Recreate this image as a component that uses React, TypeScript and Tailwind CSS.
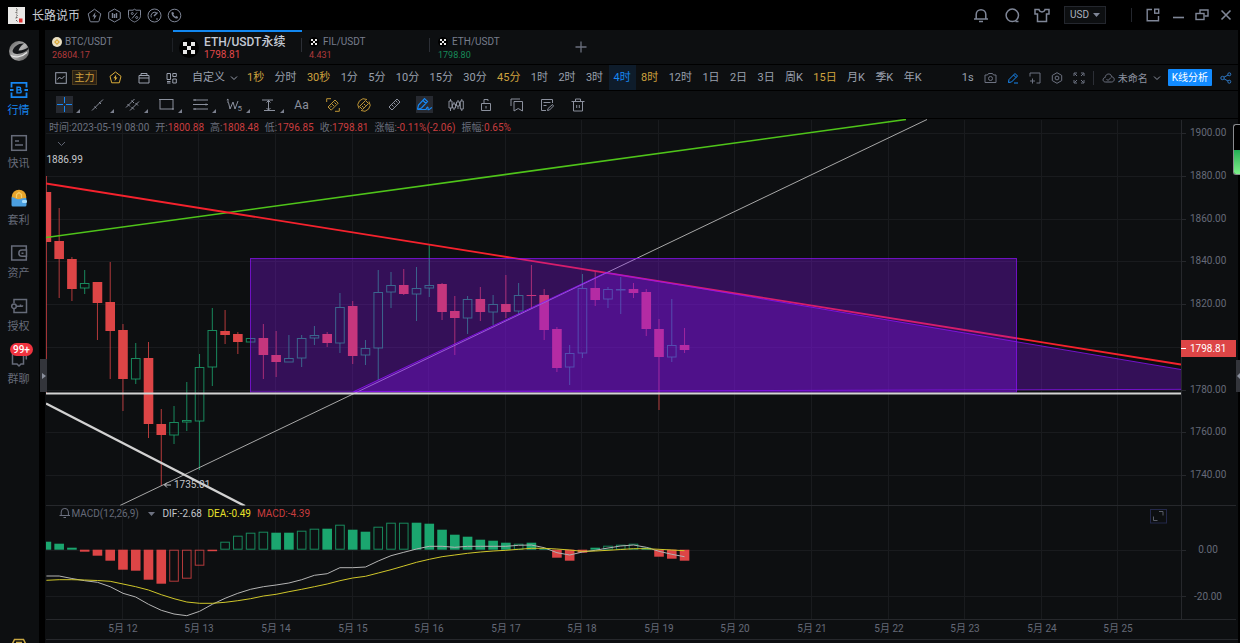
import React from "react";

type Kids = { children: React.ReactNode };

function Icon({ w = 12, h = 12, sw = 1, className = "", children }: Kids & { w?: number; h?: number; sw?: number; className?: string }) {
  return (
    <svg width={w} height={h} viewBox={`0 0 ${w} ${h}`} fill="none" stroke="currentColor" strokeWidth={sw} className={`shrink-0 ${className}`} aria-hidden="true">
      {children}
    </svg>
  );
}

function IconButton({ label, className = "", children }: Kids & { label: string; className?: string }) {
  return (
    <button type="button" aria-label={label} className={`flex shrink-0 items-center justify-center ${className}`}>
      {children}
    </button>
  );
}

/* ---------- title bar ---------- */

function TitleBar() {
  return (
    <header className="flex h-[30px] shrink-0 items-center bg-black pr-2 pl-2 text-[#7f8697]">
      <svg width="17" height="17" viewBox="0 0 17 17" className="shrink-0" aria-hidden="true">
        <rect width="17" height="17" fill="#e9e8e6" />
        <path d="M8 1.5l1.5 1M8.8 3v1.500M7.500 5.500l2 .5M8.500 7.500l1 1.500M7.500 11l2-.5M8 13l1.500 1.500M8.500 9.500v1" stroke="#55524f" strokeWidth=".9" fill="none" />
        <rect x="11" y="11.500" width="3.500" height="4" fill="#e03030" />
      </svg>
      <h1 className="ml-[7px] pt-px text-[12px] leading-4 text-[#c6cad3]">长路说币</h1>
      <nav aria-label="快捷工具" className="ml-[7px] flex gap-[5px]">
        <IconButton label="闪电">
          <Icon w={15} h={15}>
            <path d="M7.500 1.200l6.300 4.600-1.800 7.300q-.2.700-.9.700H3.900q-.7 0-.9-.7L1.200 5.800z" />
            <path d="M8.500 4L5.300 8.500h1.900L6.500 12l3.200-4.600H7.800z" fill="currentColor" stroke="none" />
          </Icon>
        </IconButton>
        <IconButton label="行情">
          <Icon w={15} h={15}>
            <path d="M7.500 1l5.800 3.300v6.400L7.500 14l-5.800-3.300V4.300z" />
            <path d="M5.500 5v5M7.500 6v4M9.500 5v5" strokeWidth="1.400" />
          </Icon>
        </IconButton>
        <IconButton label="费率">
          <Icon w={15} h={15}>
            <path d="M7.500 1.200l1.500 1h4.500v5.500c0 3-3 5.200-6 6.300-3-1.100-6-3.300-6-6.300V2.200H6z" />
            <path d="M10 4.500l-5 6" />
            <circle cx="5.300" cy="5.500" r="1" />
            <circle cx="9.700" cy="9.500" r="1" />
          </Icon>
        </IconButton>
        <IconButton label="指标">
          <Icon w={15} h={15}>
            <circle cx="7.500" cy="7.500" r="6.500" />
            <path d="M4.300 9.500a3.800 3.800 0 0 1 5-5" />
            <path d="M10.500 4.500L7 8" strokeWidth="1.400" />
            <path d="M9 11h2" />
          </Icon>
        </IconButton>
        <IconButton label="电话">
          <Icon w={15} h={15}>
            <circle cx="7.500" cy="7.500" r="6.300" />
            <path d="M4.600 4.300c-.8 2.800 2.800 6.600 5.900 6.300l.6-1.700-1.700-.8-.9.6C7.500 8.200 6.800 7.500 6.300 6.600l.7-.9-.8-1.700z" fill="currentColor" stroke="none" />
          </Icon>
        </IconButton>
      </nav>

      <div className="ml-auto flex items-center">
        <IconButton label="通知">
          <Icon w={14} h={15} sw={1.5}>
            <path d="M0 11h14M2.200 11V6.500a4.800 4.800 0 0 1 9.600 0V11M5 13.500h4" />
          </Icon>
        </IconButton>
        <IconButton label="搜索" className="ml-[17px]">
          <Icon w={15} h={15} sw={1.5}>
            <circle cx="7.300" cy="7.300" r="6.200" />
            <path d="M10.500 13.500h3" />
          </Icon>
        </IconButton>
        <IconButton label="皮肤" className="ml-[14px]">
          <Icon w={16} h={15} sw={1.5}>
            <path d="M5 1.500H1v4.500h2.500v7.500h9V6H15V1.500h-4C10.500 4.700 5.500 4.700 5 1.500z" />
          </Icon>
        </IconButton>
        <label className="relative ml-[14px] flex h-[18px] w-[42px] items-center border border-[#24272e] bg-[#0d0f11] text-[#a9afbc]">
          <select aria-label="计价货币" defaultValue="USD" className="h-full w-full appearance-none bg-transparent pl-[5px] text-[10px] leading-4 outline-none">
            <option>USD</option>
            <option>CNY</option>
          </select>
          <svg width="7" height="4" viewBox="0 0 7 4" className="pointer-events-none absolute right-[5px]" aria-hidden="true">
            <path d="M0 0h7L3.500 4z" fill="#7f8697" />
          </svg>
        </label>
        <span className="ml-[25px] h-[14px] w-px bg-[#24272e]" />
        <IconButton label="弹出窗口" className="ml-[14px]">
          <Icon w={14} h={14} sw={1.4}>
            <path d="M6 1.500H1.200v11.300h11.300V8" />
            <rect x="8.700" y="1.200" width="4" height="4" />
          </Icon>
        </IconButton>
        <IconButton label="最小化" className="ml-[12px]">
          <Icon w={12} h={14} sw={1.6}>
            <path d="M1 9.500h11" />
          </Icon>
        </IconButton>
        <IconButton label="还原" className="ml-[11px]">
          <Icon w={14} h={14} sw={1.4}>
            <path d="M5 5V2h8v6H9.500" />
            <rect x="1" y="5.500" width="8" height="6" />
          </Icon>
        </IconButton>
        <IconButton label="关闭" className="ml-[11px]">
          <Icon w={12} h={12} sw={1.6}>
            <path d="M1.500 1.500l9 9M10.500 1.500l-9 9" />
          </Icon>
        </IconButton>
      </div>
    </header>
  );
}

/* ---------- side bar ---------- */

function SideItem({ label, active = false, badge, tall = false, children }: Kids & { label: string; active?: boolean; badge?: string; tall?: boolean }) {
  return (
    <li>
      <a href="#" className={`relative flex w-[37px] flex-col items-center gap-1 ${active ? "text-[#1787f2]" : "text-[#666b79]"}`}>
        <span className={`flex items-center justify-center ${tall ? "h-[22px]" : "h-[18px]"}`}>{children}</span>
        <span className="text-[11px] leading-4">{label}</span>
        {badge && <span className="absolute -top-[7px] left-[10px] rounded-full bg-[#f0333f] px-[3px] text-[10px] leading-[13px] font-medium text-white">{badge}</span>}
      </a>
    </li>
  );
}

function SideBar() {
  return (
    <aside className="flex w-[39px] shrink-0 flex-col items-center overflow-hidden bg-[#0d0f11] pr-[2px]">
      <svg width="22" height="22" viewBox="0 0 22 22" className="mt-[10px] shrink-0" aria-hidden="true">
        <defs>
          <linearGradient id="ball" x1="0" y1="0" x2="1" y2="1">
            <stop offset="0" stopColor="#5d5d5d" />
            <stop offset=".5" stopColor="#b5b5b5" />
            <stop offset="1" stopColor="#4a4a4a" />
          </linearGradient>
        </defs>
        <circle cx="11" cy="11" r="10" fill="url(#ball)" />
        <path d="M4.500 11C6 6.500 10.500 3 16 3.500 13 5 11.500 8 10.500 10.500c3 .3 7-1 10-3.500.5 2-1.500 4-5 5.500-4 1.700-10.500 2.500-11-1.500z" fill="#15171a" />
        <path d="M3 15.500c4 2.500 11 1.500 16-3" stroke="#e6e6e6" strokeWidth="1.200" fill="none" />
      </svg>
      <ul className="mt-[19px] flex flex-col gap-[15px]">
        <SideItem label="行情" active>
          <Icon w={18} h={18} sw={1.8}>
            <path d="M1.500 6.500V1.800h15v4.700M1.500 11.500v4.700h15v-4.700M0 9h3.500M14.500 9H18" />
            <path d="M7 6.200h2.300a1.300 1.300 0 0 1 0 2.700H7zM7 8.900h2.700a1.500 1.500 0 0 1 0 3H7z" strokeWidth="1.400" />
          </Icon>
        </SideItem>
        <SideItem label="快讯">
          <Icon w={18} h={18} sw={1.5}>
            <rect x="1.700" y="1.700" width="14.600" height="14.600" />
            <path d="M5 7h4M5 11h8" />
          </Icon>
        </SideItem>
        <SideItem label="套利" tall>
          <svg width="18" height="18" viewBox="0 0 18 18" aria-hidden="true">
            <circle cx="9" cy="8" r="7.300" fill="#e7a52c" />
            <path d="M6.500 9V5.500L9 3.500l2.500 2V9" stroke="#f5cf6a" strokeWidth="1.200" fill="none" />
            <path d="M1.500 8.500c2-1.200 4 1.800 7 1.800s5-2 8-.8V16q0 1.500-1.500 1.500H3Q1.500 17.500 1.500 16z" fill="#4b9fe0" />
            <rect x="12" y="11" width="5" height="3" rx="1.300" fill="#a5dbfb" />
          </svg>
        </SideItem>
        <SideItem label="资产">
          <Icon w={18} h={18} sw={1.5}>
            <path d="M16.300 6V2H1.700v14h14.600v-3.500M16.500 6H12a3 3 0 0 0 0 6.300h4.500zM11.500 9.200h2" />
          </Icon>
        </SideItem>
        <SideItem label="授权">
          <Icon w={18} h={18} sw={1.5}>
            <path d="M4 6V2.500h12.500v13H4V12" />
            <circle cx="4" cy="9.200" r="2.300" />
            <path d="M6.300 9.200h6.500M10.500 9.200V7.500M12.500 9.200v-1" />
          </Icon>
        </SideItem>
        <SideItem label="群聊" badge="99+">
          <Icon w={18} h={18} sw={1.5}>
            <path d="M2.500 4v10h4.500l2 2 2-2h2.500V4M16.300 2v7.500" />
          </Icon>
        </SideItem>
      </ul>
      <div className="mt-auto h-[5px] overflow-hidden text-[#c9a844]">
        <Icon w={16} h={16} sw={1.5}>
          <path d="M3.500 1.500h9l2 4v8h-13v-8zM5 4.500h6" />
        </Icon>
      </div>
    </aside>
  );
}

/* ---------- tabs ---------- */

function CrossMark({ size }: { size: number }) {
  return (
    <svg width={size} height={size} viewBox="0 0 20 20" className="shrink-0" aria-hidden="true">
      <circle cx="10" cy="10" r="10" fill="#000" />
      <path d="M4 4h4v4H4zM12 4h4v4h-4zM8 8h4v4H8zM4 12h4v4H4zM12 12h4v4h-4z" fill="#e8e8e8" />
    </svg>
  );
}

function SymbolTabs() {
  return (
    <nav aria-label="交易对" className="flex h-[34px] shrink-0 bg-[#0d0f11]">
      <a href="#" className="relative w-[128px] pt-[5px] pl-[7px]">
        <span className="flex items-center gap-[3px] text-[10px] leading-[14px] text-[#777d8c]">
          <svg width="10" height="10" viewBox="0 0 10 10" aria-hidden="true">
            <circle cx="5" cy="5" r="5" fill="#e9dfc4" />
            <path d="M5 2l3 3-3 3-3-3zM3.800 5L5 6.200 6.200 5 5 3.800z" fill="#d9a93a" fillRule="evenodd" />
          </svg>
          BTC/USDT
        </span>
        <span className="block text-[9px] leading-[12px] text-[#b03a3c]">26804.17</span>
        <span className="absolute top-2 right-0 h-[14px] w-px bg-[#1e2126]" />
      </a>
      <a href="#" aria-current="page" className="relative flex w-[129px] items-center gap-[5px] border-t-2 border-[#1287f0] pl-[6px]">
        <CrossMark size={20} />
        <span>
          <span className="block text-[12px] leading-[14px] font-medium text-[#c4c9d4]">ETH/USDT永续</span>
          <span className="block text-[10px] leading-[12px] text-[#e0484a]">1798.81</span>
        </span>
        <span className="absolute top-[6px] right-0 h-[14px] w-px bg-[#2c2f36]" />
      </a>
      <a href="#" className="relative w-[128px] pt-[5px] pl-[7px]">
        <span className="flex items-center gap-1 text-[10px] leading-[14px] text-[#777d8c]">
          <CrossMark size={10} />
          FIL/USDT
        </span>
        <span className="block text-[9px] leading-[12px] text-[#b03a3c]">4.431</span>
        <span className="absolute top-2 right-0 h-[14px] w-px bg-[#2c2f36]" />
      </a>
      <a href="#" className="w-[128px] pt-[5px] pl-2">
        <span className="flex items-center gap-1 text-[10px] leading-[14px] text-[#777d8c]">
          <CrossMark size={10} />
          ETH/USDT
        </span>
        <span className="block text-[9px] leading-[12px] text-[#178a58]">1798.80</span>
      </a>
      <IconButton label="添加" className="ml-[17px] text-[#6a6f7d]">
        <Icon w={12} h={12} sw={1.3}>
          <path d="M6 .5v11M.5 6h11" />
        </Icon>
      </IconButton>
    </nav>
  );
}

/* ---------- period bar ---------- */

const periods: { name: string; gold?: boolean; active?: boolean }[] = [
  { name: "1秒", gold: true }, { name: "分时" }, { name: "30秒", gold: true }, { name: "1分" }, { name: "5分" },
  { name: "10分" }, { name: "15分" }, { name: "30分" }, { name: "45分", gold: true }, { name: "1时" },
  { name: "2时" }, { name: "3时" }, { name: "4时", active: true }, { name: "8时", gold: true }, { name: "12时" },
  { name: "1日" }, { name: "2日" }, { name: "3日" }, { name: "周K" }, { name: "15日", gold: true },
  { name: "月K" }, { name: "季K" }, { name: "年K" },
];

function Chevron() {
  return (
    <Icon w={8} h={6} className="pointer-events-none">
      <path d="M1 1.500l3 3 3-3" />
    </Icon>
  );
}

function PeriodBar() {
  return (
    <div className="flex h-[26px] shrink-0 items-stretch border-t border-black bg-[#0d0f11] pr-[6px] pl-[10px] text-[11px] text-[#9aa0ae]">
      <IconButton label="图表类型">
        <Icon>
          <rect x=".7" y=".7" width="10.600" height="10.600" />
          <path d="M2.500 7.500L4.500 5l2 2 3-3" />
        </Icon>
      </IconButton>
      <button type="button" className="ml-[5px] h-[15px] w-[25px] self-center border border-[#4d3b1c] bg-[#2a2114] text-center text-[10px] leading-[14px] text-[#d0a03f]">主力</button>
      <IconButton label="闪电下单" className="ml-[12px] text-[#dcae3a]">
        <Icon w={13} h={13}>
          <path d="M6.500 1l5.500 4.300-1.700 6.500H2.700L1 5.300z" />
          <path d="M7.300 3.500L4.500 7.300h1.600l-.5 3 2.900-3.900H6.800z" fill="currentColor" stroke="none" />
        </Icon>
      </IconButton>
      <IconButton label="日历" className="ml-4">
        <Icon>
          <path d="M1 3.500h10V11H1zM3 3.500v-2h6v2M1 6h10" />
        </Icon>
      </IconButton>
      <IconButton label="布局" className="ml-4">
        <Icon>
          <path d="M1 1.500h3.500v6H1zM1 9.500h3.500M6.800 1.500h3.500v3H6.800zM6.800 7h3.500v4H6.800zM1 11h3.500" />
        </Icon>
      </IconButton>
      <label className="ml-[14px] flex items-center gap-1">
        <select aria-label="自定义周期" defaultValue="自定义" className="w-[34px] appearance-none bg-transparent pt-[2px] outline-none">
          <option>自定义</option>
        </select>
        <Chevron />
      </label>
      <div className="mr-[40px] ml-[9px] flex flex-1 items-stretch justify-between">
        {periods.map((p) => (
          <button
            key={p.name}
            type="button"
            className={`pt-[2px] whitespace-nowrap ${p.active ? "-mx-[5px] bg-[#0e1c2b] px-[5px] text-[#1787f2]" : p.gold ? "text-[#cfa33e]" : ""}`}
          >
            {p.name}
          </button>
        ))}
      </div>
      <button type="button" className="pt-[2px]">1s</button>
      <div className="ml-[10px] flex gap-[10px] text-[#6d7281]">
        <IconButton label="截图">
          <Icon w={13} h={12}>
            <path d="M1 3h2.500l1-1.500h4L9.500 3H12v7.500H1z" />
            <circle cx="6.500" cy="6.500" r="2" />
          </Icon>
        </IconButton>
        <IconButton label="画线" className="text-[#1787f2]">
          <Icon>
            <path d="M1.500 10.500l.5-3L8 1.500 10.500 4l-6 6zM6.500 3L9 5.500M7 11h4" />
          </Icon>
        </IconButton>
        <IconButton label="添加窗口">
          <Icon>
            <path d="M1 4.500V1h10v10H7.500M3.500 6.500v5M1 9h5" />
          </Icon>
        </IconButton>
        <IconButton label="设置">
          <Icon>
            <path d="M6 .7l4.700 2.700v5.200L6 11.300 1.300 8.600V3.400z" />
            <circle cx="6" cy="6" r="1.900" />
          </Icon>
        </IconButton>
        <IconButton label="全屏">
          <Icon>
            <path d="M1 4V1h3M8 1h3v3M11 8v3H8M4 11H1V8M1.500 1.500l2.500 2.500M10.500 1.500L8 4M10.500 10.500L8 8M1.500 10.500L4 8" />
          </Icon>
        </IconButton>
      </div>
      <span className="ml-2 h-[14px] w-px self-center bg-[#2c2f36]" />
      <label className="ml-2 flex items-center gap-[3px] text-[10px] text-[#8d93a1]">
        <Icon w={13} h={12} className="text-[#6d7281]">
          <path d="M3.500 10C.3 10 .3 5.700 3.200 5.500 3.500 1 9.300 1 9.700 4.800c3.600.4 3.200 5.200-.2 5.200zM4.500 7l1.500 1.500 3-3" />
        </Icon>
        <select aria-label="布局方案" defaultValue="未命名" className="mr-[2px] w-[30px] appearance-none bg-transparent pt-px outline-none">
          <option>未命名</option>
        </select>
        <Chevron />
      </label>
      <button type="button" className="ml-[7px] h-[17px] self-center rounded-[1px] bg-[#128bff] px-1 text-[10px] leading-[18px] text-white">K线分析</button>
      <IconButton label="分享" className="ml-2 text-[#2f78c4]">
        <Icon w={12} h={12}>
          <circle cx="2.500" cy="6" r="1.700" />
          <circle cx="9.300" cy="2.300" r="1.500" />
          <circle cx="9.300" cy="9.700" r="1.500" />
          <path d="M4 5.200l4-2.200M4 6.800l4 2.200" />
        </Icon>
      </IconButton>
    </div>
  );
}

/* ---------- drawing tools ---------- */

function Tool({ label, on = false, children }: Kids & { label: string; on?: boolean }) {
  return (
    <button type="button" aria-label={label} className="relative flex w-[34px] items-center justify-center">
      <span className={`flex h-[17px] w-[17px] items-center justify-center ${on ? "bg-[#272a31] text-[#1787f2]" : ""}`}>{children}</span>
      <svg width="4" height="4" viewBox="0 0 4 4" className="absolute right-px bottom-[5px]" aria-hidden="true">
        <path d="M4 0v4H0z" fill="#7a7f8d" />
      </svg>
    </button>
  );
}

function ToolBar() {
  return (
    <div className="flex h-[29px] shrink-0 items-stretch border-y border-black bg-[#0d0f11] pl-[2px] text-[#8b909d]">
      <Tool label="十字光标" on>
        <Icon w={15} h={15}><path d="M7.500 0v6M7.500 9v6M0 7.500h6M9 7.500h6" /></Icon>
      </Tool>
      <Tool label="线段">
        <Icon w={14} h={14}><path d="M1 12.500L12 1.500" /><path d="M3.500 8.500l2 2M8 4l2 2" /></Icon>
      </Tool>
      <Tool label="通道">
        <Icon w={15} h={15}><path d="M1 10.500L9.500 2M5 13.500L14 4.500" /><path d="M2.500 7l2.500 2.500M6.500 3.500L9 6M6.500 10l2.500 2.500M10.500 6l2.500 2.500" /></Icon>
      </Tool>
      <Tool label="矩形">
        <Icon w={15} h={13}><rect x="1" y="1.500" width="13" height="9.500" /><path d="M0 1.500h2M13 11h2" /></Icon>
      </Tool>
      <Tool label="斐波那契">
        <Icon w={15} h={13}><path d="M0 2h15M0 6.500h15M0 11h15M2 1v2M13 5.500v2M2 10v2" /></Icon>
      </Tool>
      <Tool label="波浪">
        <svg width="17" height="14" viewBox="0 0 17 14" fill="none" stroke="currentColor" aria-hidden="true">
          <path d="M2 1v4M.8 2L2 1M2.500 4.500L4 11 7 4l2 7 3-8" />
          <text x="11.500" y="13" fontSize="8" fill="currentColor" stroke="none">5</text>
        </svg>
      </Tool>
      <Tool label="测量">
        <Icon w={13} h={14}><path d="M0 2h11M2 12.500h11M6.500 2v10M4.500 4.500l2-2 2 2M4.500 10l2 2 2-2" /></Icon>
      </Tool>
      <button type="button" aria-label="文字" className="w-[33px] text-[12px]">Aa</button>
      <div className="flex w-[275px] items-stretch [&>button]:flex-1">
        <IconButton label="区间统计" className="text-[#bd9436]">
          <Icon w={14} h={14}>
            <path d="M.7 4V.7H5M13.300 10v3.300H9" />
            <path d="M2 9l7-7 3.200 3.200-7 7zM4 9.500L5.500 8M6 6l2 2M8.500 4.500L10 6" />
          </Icon>
        </IconButton>
        <IconButton label="圆形统计" className="text-[#bd9436]">
          <Icon w={14} h={14}>
            <path d="M2 10.500A6.200 6.200 0 0 1 10 1.500M12 3.500A6.200 6.200 0 0 1 4 12.500" />
            <path d="M2.500 8.500L8.500 2.500 11.500 5.500 5.500 11.500zM5 8l1.500 1.500M7 6l1.500 1.500" />
          </Icon>
        </IconButton>
        <IconButton label="标尺">
          <Icon w={13} h={13}><path d="M1 9l8-8 3 3-8 8zM4 7l1.500 1.500M6 5l1.500 1.500M8 3l1.500 1.500" /></Icon>
        </IconButton>
        <IconButton label="画笔" className="text-[#1787f2]">
          <span className="flex h-[17px] w-[17px] items-center justify-center bg-[#272a31]">
            <Icon w={17} h={15} sw={1.2}><path d="M1.500 12.500l1-4.500L8.500 1.500l3 3L5.500 11l-4 1.500h8.500c1.500-4 2.500-2 2 0 1 1 2-1 4-2M7 3.500l3 3" /></Icon>
          </span>
        </IconButton>
        <IconButton label="K线形态">
          <Icon w={16} h={14}><path d="M2.500 1v2M2.500 10v3M6 4v2M6 10v2M10 2v2M10 8v3M13.800 1v2M13.800 11v2M1 3h3v7H1zM4.500 6h3v4h-3zM8.500 4h3v4h-3zM12.300 3h3v8h-3z" /></Icon>
        </IconButton>
        <IconButton label="锁定">
          <Icon w={12} h={14}><path d="M1.500 5.500h9v7h-9zM4 5.500V1.500h4v1.500M6 8v2.500" /></Icon>
        </IconButton>
        <IconButton label="收藏">
          <Icon w={14} h={14}><path d="M1 8V1h9M4 3.500h8.500v9.500L8.200 10.500 4 13z" /></Icon>
        </IconButton>
        <IconButton label="备注">
          <Icon w={14} h={14}><path d="M12.500 5V1.500h-11v11H6M3.500 4.500h7M3.500 7.500h3M7.500 12.500l.5-2 4.500-4 1 1.500L9.500 12z" /></Icon>
        </IconButton>
        <IconButton label="删除">
          <Icon w={14} h={14}><path d="M.5 3.500h13M4.500 3.500v-2.500h5v2.500M2.500 3.500v9.500h9V3.500M5.700 7v3M8.300 7v3" /></Icon>
        </IconButton>
      </div>
    </div>
  );
}

/* ---------- chart ---------- */

// [rising, high, body top, body bottom, low]
type Candle = [0 | 1, number, number, number, number];

const candles: Candle[] = [
  [0, 176, 192, 242, 393], [0, 208, 241, 259, 298], [0, 257, 259, 289, 301], [1, 270, 283, 288, 294],
  [0, 282, 282, 303, 340], [0, 262, 302, 331, 379], [0, 324, 330, 379, 411], [1, 343, 358, 379, 384],
  [0, 342, 358, 424, 438], [0, 409, 424, 435, 486], [1, 406, 422, 435, 444], [1, 382, 420, 422, 431],
  [1, 354, 367, 421, 470], [1, 308, 330, 367, 386], [0, 310, 331, 335, 344], [0, 332, 334, 342, 354],
  [1, 338, 338, 342, 342], [0, 324, 338, 355, 379], [0, 331, 355, 362, 377], [1, 335, 358, 362, 362],
  [1, 335, 338, 358, 367], [1, 326, 335, 338, 345], [0, 332, 334, 343, 347], [1, 293, 307, 343, 353],
  [0, 301, 306, 356, 364], [1, 340, 348, 355, 365], [1, 270, 292, 348, 380], [1, 272, 285, 292, 308],
  [0, 269, 285, 294, 295], [1, 267, 288, 294, 321], [1, 245, 285, 288, 297], [0, 283, 284, 312, 320],
  [0, 296, 311, 318, 355], [1, 296, 299, 318, 334], [0, 287, 299, 312, 321], [1, 295, 304, 312, 325],
  [0, 275, 304, 312, 318], [1, 283, 295, 311, 315], [0, 265, 295, 296, 309], [0, 289, 295, 330, 340],
  [0, 327, 329, 368, 372], [1, 345, 353, 367, 385], [1, 274, 288, 353, 358], [0, 271, 288, 300, 306],
  [1, 287, 289, 299, 308], [1, 277, 289, 290, 314], [0, 283, 289, 293, 298], [0, 289, 292, 329, 336],
  [0, 319, 329, 357, 410], [1, 299, 345, 357, 362], [0, 328, 345, 350, 353],
];

// signed bar height against the zero line, and whether the bar is hollow
const histogram: [number, (0 | 1)?][] = [
  [8], [6], [2], [-2], [-6], [-11], [-20], [-21], [-30], [-34], [-32, 1], [-29, 1], [-16, 1], [-1.5],
  [8, 1], [14, 1], [17, 1], [18, 1], [17], [17], [19, 1], [21, 1], [21], [25, 1], [20], [18], [23, 1],
  [27, 1], [27, 1], [27], [26], [20], [15], [13], [10], [9], [7], [6, 1], [7], [1], [-8], [-11], [-3], [2],
  [4, 1], [5, 1], [6, 1], [2], [-7], [-9], [-11],
];

const dif = [
  576, 576, 578.5, 580.7, 582.3, 586.7, 593.3, 597, 604.3, 610.3, 614, 615.7, 611.3, 604.3, 598.3, 593.3, 589.3,
  586.7, 585, 583, 579.7, 575.3, 573.7, 567.7, 567.7, 567, 561, 555.7, 552.3, 549, 546.3, 546.3, 547.3, 546.3, 546.3,
  546.3, 546.3, 545.3, 545, 547.7, 552.7, 555, 552, 550.3, 548, 546, 545, 547.3, 551.3, 554.3, 556.7,
];

const dea = [
  580.3, 579.7, 579.7, 580, 580.5, 581.3, 584, 586.7, 590, 594.7, 598.7, 602, 603.3, 603.3, 602.3, 600.7, 598.7, 596,
  594.3, 591.7, 589.3, 586.7, 584, 580.7, 578, 576.3, 573, 569.7, 566, 562.3, 559.3, 556.7, 555, 553.3, 552, 551,
  550.3, 549.3, 548.3, 548.3, 549, 550, 551.3, 551, 550.3, 549.5, 548.7, 548.7, 549.3, 550, 550.7,
];

const xAt = (i: number) => 46.4 + i * 12.763;
const linePoints = (ys: number[]) => ys.map((y, i) => `${xAt(i).toFixed(1)},${y}`).join(" ");

const days = Array.from({ length: 14 }, (_, i) => ({ x: Math.round(122.8 + i * 76.58), label: `5月 ${12 + i}` }));
const prices = Array.from({ length: 9 }, (_, i) => ({ y: Math.round(133 + i * 42.75), label: (1900 - i * 20).toFixed(2) }));

const RED = "#dd4546";
const GREEN = "#1ba66f";

function Chart() {
  return (
    <svg viewBox="45 119 1193 524" preserveAspectRatio="xMinYMin meet" className="block h-full w-full" role="img" aria-label="ETH/USDT永续 4小时K线图">
      <defs>
        <clipPath id="plot"><rect x="46" y="119" width="1135" height="386.500" /></clipPath>
        <clipPath id="macd"><rect x="46" y="506" width="1135" height="113" /></clipPath>
      </defs>

      <g stroke="#191b1e">
        {days.map((d) => <path key={d.label} d={`M${d.x - 0.5} 120V619`} />)}
        {prices.map((p) => <path key={p.label} d={`M46 ${p.y + 0.5}H1181`} />)}
        <path d="M46 550.500H1181M46 596.500H1181" />
      </g>
      <g stroke="#26282c">
        <path d="M46 505.500H1236M46 619.500H1236M46 639.500H1238M1181.500 120V619" />
        {prices.map((p) => <path key={p.label} d={`M1182 ${p.y + 0.5}h4`} />)}
        <path d="M1182 550.500h4M1182 596.500h4" />
      </g>

      <g clipPath="url(#plot)">
        {candles.map(([up, high, top, bottom, low], i) => {
          const x = xAt(i);
          return up ? (
            <g key={i} stroke={GREEN} fill="none">
              <path d={`M${x} ${high}V${top}M${x} ${bottom}V${low}`} opacity=".8" />
              <rect x={x - 4.3} y={top + 0.5} width="8.600" height={Math.max(bottom - top - 0.5, 0.5)} opacity=".8" />
            </g>
          ) : (
            <g key={i}>
              <path d={`M${x} ${high}V${low}`} stroke={RED} opacity=".8" />
              <rect x={x - 4.8} y={top} width="9.600" height={bottom - top} fill={RED} />
            </g>
          );
        })}
        <path d="M46 237.500L906 119.500" stroke="#4fc41a" strokeWidth="1.600" />
        <path d="M46 183.500L1181 364.500" stroke="#f5222d" strokeWidth="1.800" />
        <path d="M120 505.500L927 119.500" stroke="#a8a8a8" />
        <path d="M46 403.500L245 506" stroke="#d2d2d2" strokeWidth="2.400" />
        <rect x="250.500" y="258.500" width="766" height="133.500" fill="#9013fe" fillOpacity=".3" stroke="#9013fe" strokeOpacity=".7" />
        <path d="M353.500 391.700L606 272.500L1200 372.700V389.300z" fill="#9013fe" fillOpacity=".3" stroke="#9013fe" strokeOpacity=".75" />
        <path d="M46 393.500H1181" stroke="#d4d4d4" strokeWidth="2" />
      </g>

      <g clipPath="url(#macd)">
        {histogram.map(([v, hollow], i) => {
          const color = v > 0 ? GREEN : RED;
          const y = v > 0 ? 549.7 - v : 549.7;
          const h = Math.abs(v);
          return hollow ? (
            <rect key={i} x={xAt(i) - 4.3} y={y + 0.5} width="8.600" height={h - 1} fill="none" stroke={color} opacity=".8" />
          ) : (
            <rect key={i} x={xAt(i) - 4.8} y={y} width="9.600" height={h} fill={color} />
          );
        })}
        <polyline points={linePoints(dif)} fill="none" stroke="#b4b4b4" />
        <polyline points={linePoints(dea)} fill="none" stroke="#cfc62a" />
      </g>

      <g fontSize="10" fill="#656a78">
        {prices.map((p) => <text key={p.label} x="1190" y={p.y + 3}>{p.label}</text>)}
        <text x="1208" y="553" textAnchor="middle">0.00</text>
        <text x="1208" y="600" textAnchor="middle">-20.00</text>
        {days.map((d) => <text key={d.label} x={d.x} y="632" textAnchor="middle">{d.label}</text>)}
      </g>

      <rect x="1181" y="340" width="55" height="17" fill={RED} />
      <path d="M1181 348.500h5" stroke="#fff" />
      <text x="1190" y="352" fontSize="10" fill="#fff">1798.81</text>

      <path d="M58 142l3.500 3.500L65 142" stroke="#5f6472" fill="none" />
      <text x="46.500" y="163" fontSize="10" fill="#c4c6ca">1886.99</text>
      <path d="M171 485h-6.500M167 482.500l-2.500 2.500 2.500 2.500" stroke="#c4c6ca" fill="none" />
      <text x="174" y="488" fontSize="10" fill="#c4c6ca">1735.01</text>

      <path d="M59.500 515.500h10.500M61.200 515.500v-3.500a3.600 3.600 0 0 1 7.200 0v3.500M63.500 517.500h2.500" stroke="#6d7281" fill="none" />
      <g fontSize="10">
        <text x="71.500" y="516.500" fill="#656a78">MACD(12,26,9)</text>
        <path d="M148 512h7l-3.500 4z" fill="#6d7281" />
        <text x="162.500" y="516.500" fill="#c4c6ca">DIF:-2.68</text>
        <text x="207.500" y="516.500" fill="#e8e22a">DEA:-0.49</text>
        <text x="257" y="516.500" fill="#c93d3f">MACD:-4.39</text>
      </g>
      <g fill="none">
        <rect x="1150.500" y="509.500" width="16" height="13.500" stroke="#23284a" />
        <path d="M1159 511.500h4v4M1153.500 516.500v4h4" stroke="#5a5e69" />
      </g>
    </svg>
  );
}

const quote: [string, string][] = [
  ["开", "1800.88"], ["高", "1808.48"], ["低", "1796.85"], ["收", "1798.81"], ["涨幅", "-0.11%(-2.06)"], ["振幅", "0.65%"],
];

function ChartPanel() {
  return (
    <section className="relative min-h-0 flex-1 bg-[#0d0f11]">
      <Chart />
      <p className="absolute top-[2px] left-1 flex gap-[6px] text-[10px] leading-[14px] whitespace-nowrap text-[#6b707e]">
        <span>时间:2023-05-19 08:00</span>
        {quote.map(([name, value]) => (
          <span key={name}>{name}:<span className="text-[#c93d3f]">{value}</span></span>
        ))}
      </p>
      <IconButton label="展开左侧" className="absolute top-[240px] -left-[5px] h-[33px] w-[7px] bg-[#33353b]">
        <svg width="4" height="6" viewBox="0 0 4 6" aria-hidden="true"><path d="M0 0l4 3-4 3z" fill="#8b909d" /></svg>
      </IconButton>
      <IconButton label="展开右侧" className="absolute top-[241px] -right-[2px] h-[32px] w-1 bg-[#33353b]">
        <svg width="3" height="6" viewBox="0 0 3 6" aria-hidden="true"><path d="M3 0L0 3l3 3z" fill="#8b909d" /></svg>
      </IconButton>
      <div className="absolute top-[5px] -right-[2px] flex h-[51px] w-[7px] flex-col justify-end overflow-hidden rounded-l-[3px] border border-r-0 border-[#8a8c8f] bg-black">
        <span className="h-1/2 bg-linear-to-b from-[#1fae55] to-[#7cf08a]" />
      </div>
    </section>
  );
}

export default function App() {
  return (
    <div className="flex h-screen flex-col overflow-hidden bg-black font-['Roboto','Noto_Sans_CJK_SC',sans-serif]">
      <TitleBar />
      <div className="flex min-h-0 flex-1">
        <SideBar />
        <main className="mr-[2px] ml-[6px] flex min-w-0 flex-1 flex-col">
          <SymbolTabs />
          <PeriodBar />
          <ToolBar />
          <ChartPanel />
        </main>
      </div>
    </div>
  );
}
